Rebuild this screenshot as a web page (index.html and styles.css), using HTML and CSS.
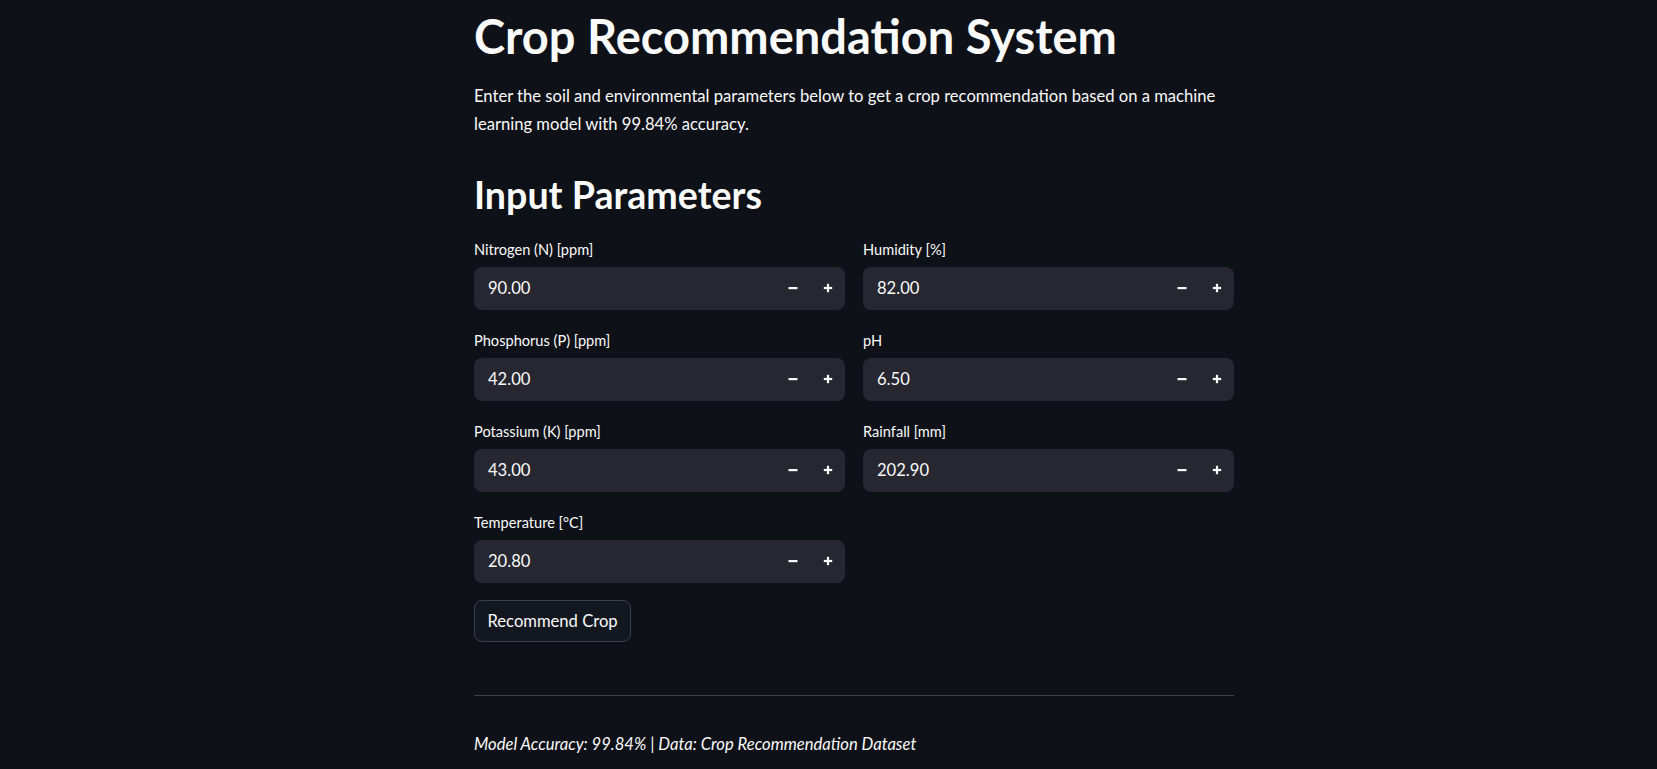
FILE: index.html
```html
<!DOCTYPE html>
<html lang="en">
<head>
<meta charset="utf-8">
<title>Crop Recommendation System</title>
<link rel="stylesheet" href="styles.css">
</head>
<body>
<main class="page">
  <h1 class="title">Crop Recommendation System</h1>
  <p class="intro">Enter the soil and environmental parameters below to get a crop recommendation based on a machine learning model with 99.84% accuracy.</p>
  <h2 class="section">Input Parameters</h2>
  <div class="columns">
    <div class="col">
      <div class="field">
        <label class="label">Nitrogen (N) [ppm]</label>
        <div class="box"><span class="value">90.00</span><span class="steps"><span class="step"><svg width="10" height="10" viewBox="0 0 10 10"><rect x="0.5" y="4" width="9" height="2.2" fill="#fafafa"/></svg></span><span class="step"><svg width="10" height="10" viewBox="0 0 10 10"><rect x="0.8" y="3.9" width="8.4" height="2.2" fill="#fafafa"/><rect x="3.9" y="0.8" width="2.2" height="8.4" fill="#fafafa"/></svg></span></span></div>
      </div>
      <div class="field">
        <label class="label">Phosphorus (P) [ppm]</label>
        <div class="box"><span class="value">42.00</span><span class="steps"><span class="step"><svg width="10" height="10" viewBox="0 0 10 10"><rect x="0.5" y="4" width="9" height="2.2" fill="#fafafa"/></svg></span><span class="step"><svg width="10" height="10" viewBox="0 0 10 10"><rect x="0.8" y="3.9" width="8.4" height="2.2" fill="#fafafa"/><rect x="3.9" y="0.8" width="2.2" height="8.4" fill="#fafafa"/></svg></span></span></div>
      </div>
      <div class="field">
        <label class="label">Potassium (K) [ppm]</label>
        <div class="box"><span class="value">43.00</span><span class="steps"><span class="step"><svg width="10" height="10" viewBox="0 0 10 10"><rect x="0.5" y="4" width="9" height="2.2" fill="#fafafa"/></svg></span><span class="step"><svg width="10" height="10" viewBox="0 0 10 10"><rect x="0.8" y="3.9" width="8.4" height="2.2" fill="#fafafa"/><rect x="3.9" y="0.8" width="2.2" height="8.4" fill="#fafafa"/></svg></span></span></div>
      </div>
      <div class="field">
        <label class="label">Temperature [°C]</label>
        <div class="box"><span class="value">20.80</span><span class="steps"><span class="step"><svg width="10" height="10" viewBox="0 0 10 10"><rect x="0.5" y="4" width="9" height="2.2" fill="#fafafa"/></svg></span><span class="step"><svg width="10" height="10" viewBox="0 0 10 10"><rect x="0.8" y="3.9" width="8.4" height="2.2" fill="#fafafa"/><rect x="3.9" y="0.8" width="2.2" height="8.4" fill="#fafafa"/></svg></span></span></div>
      </div>
    </div>
    <div class="col">
      <div class="field">
        <label class="label">Humidity [%]</label>
        <div class="box"><span class="value">82.00</span><span class="steps"><span class="step"><svg width="10" height="10" viewBox="0 0 10 10"><rect x="0.5" y="4" width="9" height="2.2" fill="#fafafa"/></svg></span><span class="step"><svg width="10" height="10" viewBox="0 0 10 10"><rect x="0.8" y="3.9" width="8.4" height="2.2" fill="#fafafa"/><rect x="3.9" y="0.8" width="2.2" height="8.4" fill="#fafafa"/></svg></span></span></div>
      </div>
      <div class="field">
        <label class="label">pH</label>
        <div class="box"><span class="value">6.50</span><span class="steps"><span class="step"><svg width="10" height="10" viewBox="0 0 10 10"><rect x="0.5" y="4" width="9" height="2.2" fill="#fafafa"/></svg></span><span class="step"><svg width="10" height="10" viewBox="0 0 10 10"><rect x="0.8" y="3.9" width="8.4" height="2.2" fill="#fafafa"/><rect x="3.9" y="0.8" width="2.2" height="8.4" fill="#fafafa"/></svg></span></span></div>
      </div>
      <div class="field">
        <label class="label">Rainfall [mm]</label>
        <div class="box"><span class="value">202.90</span><span class="steps"><span class="step"><svg width="10" height="10" viewBox="0 0 10 10"><rect x="0.5" y="4" width="9" height="2.2" fill="#fafafa"/></svg></span><span class="step"><svg width="10" height="10" viewBox="0 0 10 10"><rect x="0.8" y="3.9" width="8.4" height="2.2" fill="#fafafa"/><rect x="3.9" y="0.8" width="2.2" height="8.4" fill="#fafafa"/></svg></span></span></div>
      </div>
    </div>
  </div>
  <button class="btn">Recommend Crop</button>
  <hr class="divider">
  <p class="footer"><em>Model Accuracy: 99.84% | Data: Crop Recommendation Dataset</em></p>
</main>
</body>
</html>
```

FILE: styles.css
```css
* { box-sizing: border-box; }
html, body {
  margin: 0;
  padding: 0;
  background: #0e1117;
  color: #fafafa;
  font-family: Lato, "Noto Sans", sans-serif;
}
.page {
  width: 760px;
  margin-left: 474px;
  padding-top: 8px;
  display: flex;
  flex-direction: column;
  align-items: stretch;
}
.title {
  margin: 0;
  font-size: 47px;
  font-weight: 700;
  line-height: 57px;
}
.intro {
  margin: 18px 0 0;
  font-size: 16.6px;
  line-height: 27.6px;
}
.section {
  margin: 34px 0 0;
  font-size: 37.6px;
  font-weight: 700;
  line-height: 46.5px;
}
.columns {
  margin-top: 18px;
  display: grid;
  grid-template-columns: 1fr 1fr;
  column-gap: 18px;
  align-items: start;
}
.col {
  display: flex;
  flex-direction: column;
  gap: 18px;
}
.field {
  display: flex;
  flex-direction: column;
}
.label {
  height: 30px;
  font-size: 14.6px;
  line-height: 26px;
}
.box {
  height: 43px;
  background: #262730;
  border-radius: 8px;
  display: flex;
  align-items: center;
  padding-left: 14px;
}
.value {
  flex: 1;
  font-size: 16.6px;
}
.steps {
  display: flex;
  height: 100%;
}
.step {
  width: 34.5px;
  display: flex;
  align-items: center;
  justify-content: center;
}
.btn {
  align-self: flex-start;
  margin-top: 17px;
  height: 42.4px;
  padding: 0 12.5px;
  background: #131720;
  border: 1px solid #3d4047;
  border-radius: 8px;
  color: #fafafa;
  font-family: inherit;
  font-size: 16.6px;
}
.divider {
  margin: 52.5px 0 0;
  border: 0;
  height: 1px;
  background: #3d4047;
}
.footer {
  margin: 35px 0 0;
  font-size: 16.6px;
  line-height: 27.6px;
}
```
